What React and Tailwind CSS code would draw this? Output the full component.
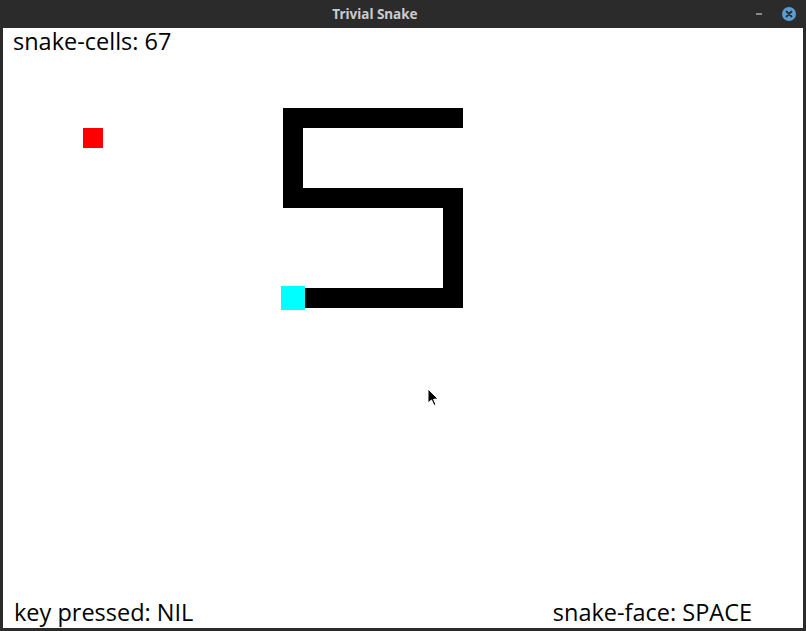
const CELL = 20;

// snake body segments in window pixels (x, y, w, h)
const BODY = [
  [283, 108, 180, 20],
  [283, 108, 20, 100],
  [283, 188, 180, 20],
  [443, 188, 20, 120],
  [303, 288, 160, 20],
];

function TitleBar() {
  return (
    <div className="relative flex h-[28px] items-center justify-center bg-[#2b2b2b] pr-[56px]">
      <span className="text-[13.5px] font-bold text-[#c9cbcd]" style={{ fontFamily: '"Noto Sans", sans-serif' }}>
        Trivial Snake
      </span>
      <div className="absolute right-[10px] top-0 flex h-full items-center gap-[20px]">
        <span className="block h-[2px] w-[6px] bg-[#8a8a8a]" />
        <span className="flex h-[14px] w-[14px] items-center justify-center rounded-full bg-[#5b9dd0]">
          <svg width="8" height="8" viewBox="0 0 8 8">
            <path d="M1.5 1.5 L6.5 6.5 M6.5 1.5 L1.5 6.5" stroke="#2b2b2b" strokeWidth="1.8" strokeLinecap="round" />
          </svg>
        </span>
      </div>
    </div>
  );
}

function Board() {
  // svg origin is the content area's corner (3, 28)
  return (
    <svg className="absolute inset-0" width="800" height="600" viewBox="3 28 800 600">
      <rect x="83" y="128" width={CELL} height={CELL} fill="#ff0000" />
      {BODY.map(([x, y, w, h], i) => (
        <rect key={i} x={x} y={y} width={w} height={h} fill="#000" />
      ))}
      <rect x="281" y="286" width="24" height="24" fill="#00ffff" />
      {/* mouse pointer */}
      <path
        d="M428 389 L428 403 L431.5 400 L434 405.5 L436 404.5 L433.5 399.3 L438 399 Z"
        fill="#000"
        stroke="#fff"
        strokeWidth="1"
        strokeLinejoin="round"
      />
    </svg>
  );
}

export default function App() {
  return (
    <div className="flex h-[631px] w-[806px] flex-col bg-[#2b2b2b]" style={{ fontFamily: '"Open Sans", sans-serif' }}>
      <TitleBar />
      <div className="relative mx-[3px] mb-[3px] flex flex-1 flex-col justify-between bg-white px-[10px] text-[23.5px] leading-[26px] text-black">
        <Board />
        <div className="relative">snake-cells: 67</div>
        <div className="relative flex justify-between pb-[3px] pl-[1px] pr-[41px]">
          <span>key pressed: NIL</span>
          <span>snake-face: SPACE</span>
        </div>
      </div>
    </div>
  );
}
